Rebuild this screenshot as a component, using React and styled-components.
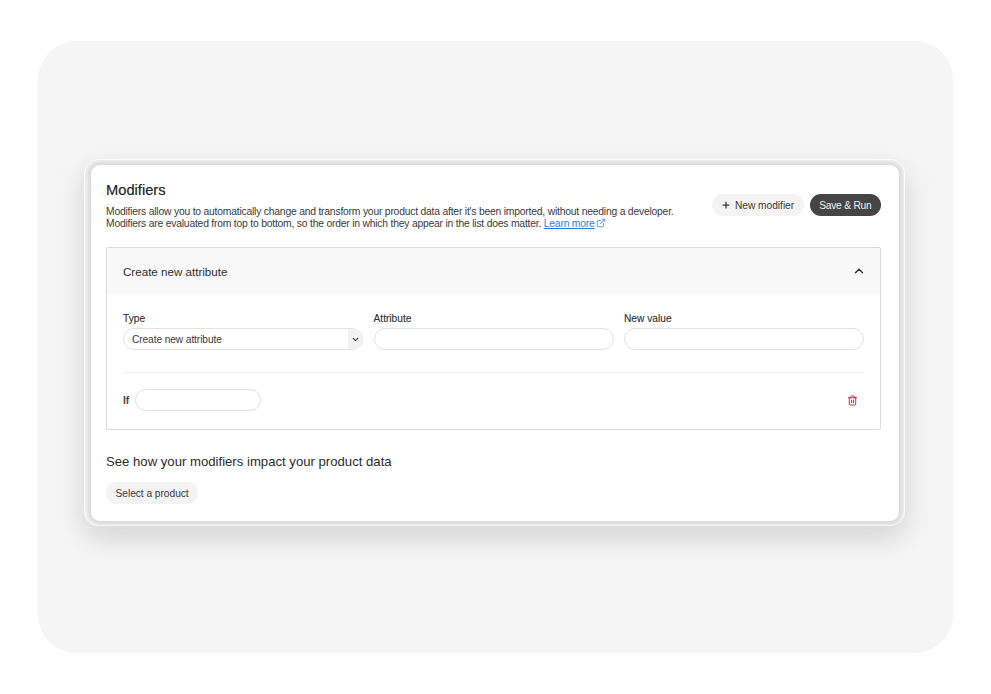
import React from "react";
import styled, { createGlobalStyle } from "styled-components";
import { ChevronDown, ChevronUp, Plus, Trash2, ExternalLink } from "lucide-react";

const GlobalStyle = createGlobalStyle`
  html, body {
    margin: 0;
    padding: 0;
    background: #fff;
    font-family: "Liberation Sans", Arial, sans-serif;
    color: #2b2b2b;
  }
`;

const Page = styled.div`
  width: 991px;
  height: 694px;
  box-sizing: border-box;
  padding: 41px 38px;
`;

const Backdrop = styled.div`
  width: 915px;
  height: 612px;
  box-sizing: border-box;
  padding: 118px 0 0 46px;
  background: #f5f5f5;
  border-radius: 38px;
`;

const Frame = styled.div`
  width: 821px;
  box-sizing: border-box;
  padding: 5px 5px 4px 6px;
  background: #efefef;
  border: 1px solid #fcfcfc;
  border-radius: 14px;
  box-shadow: 0 12px 30px rgba(0, 0, 0, 0.14);
`;

const Card = styled.div`
  box-sizing: border-box;
  height: 356px;
  padding: 15px 18px 0 15px;
  background: #fff;
  border-radius: 9px;
  box-shadow: 0 0 3px 3px #dcdcdc;
`;

const Header = styled.div`
  display: flex;
  justify-content: space-between;
  align-items: flex-start;
  height: 67px;
`;

const Title = styled.h1`
  margin: 1px 0 6px;
  font-size: 14.7px;
  line-height: 19px;
  font-weight: 400;
  color: #222;
  -webkit-text-stroke: 0.2px #222;
`;

const Description = styled.p`
  margin: 0;
  font-size: 10.35px;
  line-height: 12px;
  letter-spacing: -0.21px;
  color: #3a3a3a;
`;

const LearnMore = styled.a`
  color: #2f7de1;
  text-decoration: underline;

  svg {
    margin-left: 1px;
    vertical-align: -1px;
  }
`;

const Actions = styled.div`
  display: flex;
  gap: 6px;
  margin-top: 14px;
`;

const Button = styled.button`
  display: inline-flex;
  align-items: center;
  justify-content: center;
  gap: 4px;
  height: 22px;
  padding: 0 9.5px;
  border: 0;
  border-radius: 11px;
  background: ${(props) => (props.$dark ? "#454545" : "#f3f3f3")};
  color: ${(props) => (props.$dark ? "#f2f2f2" : "#3a3a3a")};
  font-family: inherit;
  font-size: 10.2px;
  letter-spacing: ${(props) => (props.$dark ? "-0.2px" : "-0.03px")};
`;

const Accordion = styled.section`
  box-sizing: border-box;
  height: 183px;
  border: 1px solid #d9d9d9;
  border-bottom-width: 1.5px;
  border-radius: 2px;
`;

const AccordionHeader = styled.div`
  display: flex;
  justify-content: space-between;
  align-items: center;
  height: 46px;
  padding: 0 14px 0 16px;
  background: #f9f9f9;
  font-size: 11.6px;
  color: #2e2e2e;
`;

const AccordionBody = styled.div`
  padding: 19px 16px 0;
`;

const Fields = styled.div`
  display: grid;
  grid-template-columns: repeat(3, 240px);
  column-gap: 10.5px;
  padding-bottom: 22px;
  border-bottom: 1px solid #f3f3f3;
`;

const Field = styled.div`
  display: flex;
  flex-direction: column;
  gap: 3px;
`;

const Label = styled.label`
  font-size: 10.2px;
  line-height: 12px;
  color: #2e2e2e;
  -webkit-text-stroke: 0.1px #2e2e2e;
`;

const TextInput = styled.div`
  box-sizing: border-box;
  width: ${(props) => props.$width || "100%"};
  height: 22px;
  border: 1px solid #e2e2e2;
  border-radius: 12px;
  background: #fff;
`;

const SelectBox = styled.div`
  display: flex;
  align-items: stretch;
  justify-content: space-between;
  box-sizing: border-box;
  height: 22px;
  overflow: hidden;
  border: 1px solid #e2e2e2;
  border-radius: 12px;
  font-size: 10.2px;
  letter-spacing: -0.1px;
  color: #3a3a3a;
`;

const SelectText = styled.span`
  align-self: center;
  padding-left: 8px;
`;

const SelectArrow = styled.span`
  display: flex;
  align-items: center;
  justify-content: center;
  width: 14px;
  background: #f2f2f2;
  color: #333;
`;

const ConditionRow = styled.div`
  display: flex;
  align-items: center;
  justify-content: space-between;
  padding: 16px 6px 0 0;
`;

const Condition = styled.div`
  display: flex;
  align-items: center;
  gap: 6px;
  font-size: 10.2px;
  font-weight: 700;
  color: #444;
`;

const DeleteIcon = styled(Trash2)`
  color: #b8262a;
`;

const PreviewTitle = styled.h2`
  margin: 24px 0 12px;
  font-size: 13.15px;
  line-height: 16px;
  font-weight: 400;
  color: #2b2b2b;
`;

export default function App() {
  return (
    <Page>
      <GlobalStyle />
      <Backdrop>
        <Frame>
          <Card>
            <Header>
              <div>
                <Title>Modifiers</Title>
                <Description>
                  Modifiers allow you to automatically change and transform your product data after it's been imported, without needing a developer.
                  <br />
                  Modifiers are evaluated from top to bottom, so the order in which they appear in the list does matter.{" "}
                  <LearnMore href="#">
                    Learn more
                    <ExternalLink size={10} strokeWidth={1.8} />
                  </LearnMore>
                </Description>
              </div>
              <Actions>
                <Button>
                  <Plus size={10} strokeWidth={3} />
                  New modifier
                </Button>
                <Button $dark>Save &amp; Run</Button>
              </Actions>
            </Header>

            <Accordion>
              <AccordionHeader>
                Create new attribute
                <ChevronUp size={14} strokeWidth={2.4} />
              </AccordionHeader>
              <AccordionBody>
                <Fields>
                  <Field>
                    <Label>Type</Label>
                    <SelectBox>
                      <SelectText>Create new attribute</SelectText>
                      <SelectArrow>
                        <ChevronDown size={9} strokeWidth={3} />
                      </SelectArrow>
                    </SelectBox>
                  </Field>
                  <Field>
                    <Label>Attribute</Label>
                    <TextInput />
                  </Field>
                  <Field>
                    <Label>New value</Label>
                    <TextInput />
                  </Field>
                </Fields>
                <ConditionRow>
                  <Condition>
                    If
                    <TextInput $width="126px" />
                  </Condition>
                  <DeleteIcon size={11} strokeWidth={2} />
                </ConditionRow>
              </AccordionBody>
            </Accordion>

            <PreviewTitle>See how your modifiers impact your product data</PreviewTitle>
            <Button>Select a product</Button>
          </Card>
        </Frame>
      </Backdrop>
    </Page>
  );
}
